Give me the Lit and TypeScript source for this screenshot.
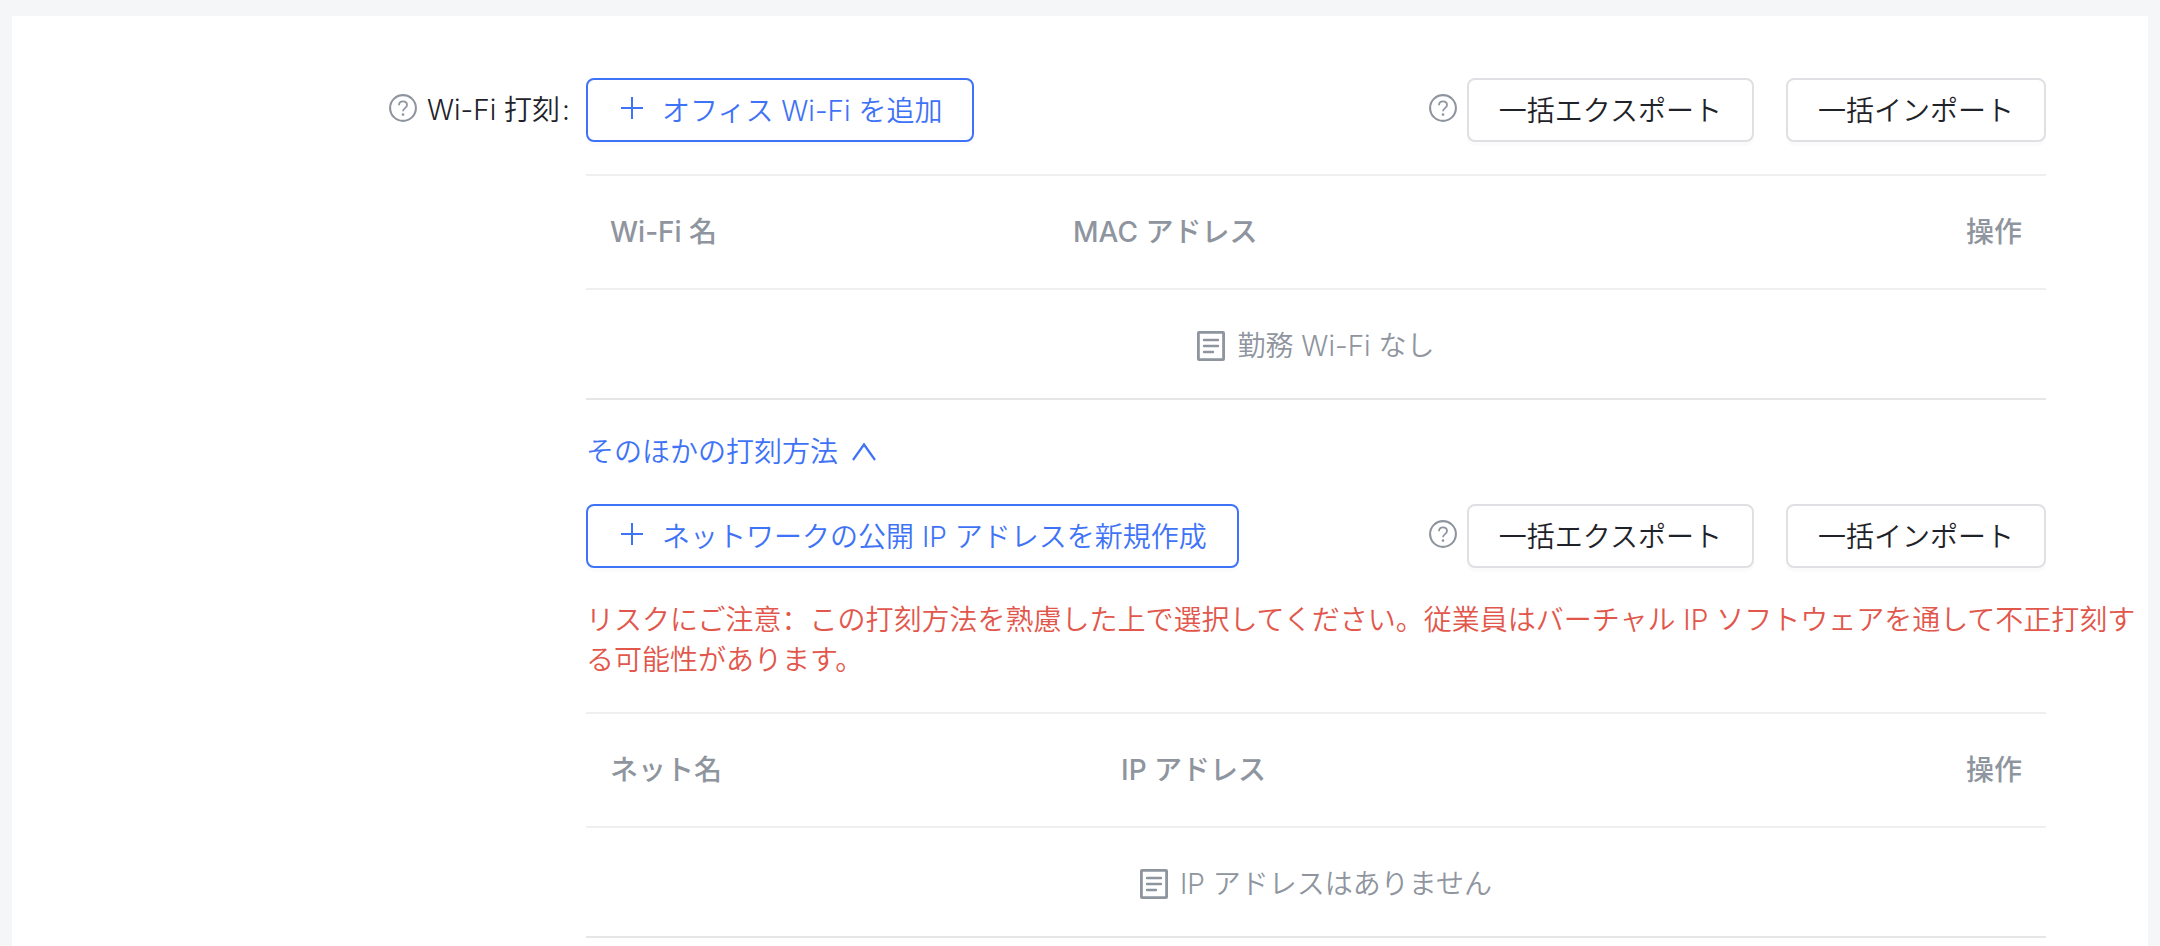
import { LitElement, html, svg, css } from "lit";
import { customElement, property, state } from "lit/decorators.js";

const helpIcon = html`<svg viewBox="0 0 28 28" width="28" height="28" fill="none" stroke="currentColor" aria-hidden="true">
  <circle cx="14" cy="14" r="12.9" stroke-width="2.1" />
  <path d="M10 11.3c0-2.4 1.7-4 4-4s4 1.5 4 3.7c0 3-4 3.2-4 6.2" stroke-width="1.8" />
  <circle cx="14" cy="20.6" r="1.3" fill="currentColor" stroke="none" />
</svg>`;

const plusIcon = html`<svg viewBox="0 0 28 28" width="28" height="28" fill="none" stroke="currentColor" stroke-width="2" aria-hidden="true">
  <path d="M14 3v22M3 14h22" />
</svg>`;

const docIcon = html`<svg viewBox="0 0 28 30" width="28" height="30" fill="none" stroke="currentColor" aria-hidden="true">
  <rect x="1.4" y="1.4" width="25.2" height="27.2" rx="0.6" stroke-width="2.8" />
  <path d="M7 9h14M7 15h14M7 21h9" stroke-width="2.4" stroke-linecap="round" />
</svg>`;

const chevron = (open: boolean) => html`<svg viewBox="0 0 28 28" width="28" height="28" fill="none" stroke="currentColor" stroke-width="2.2" aria-hidden="true">
  ${open ? svg`<path d="M3 22l11-15.500l11 15.500" />` : svg`<path d="M3 7l11 15.500l11-15.500" />`}
</svg>`;

@customElement("action-bar")
class ActionBar extends LitElement {
  @property() label = "";

  static styles = css`
    :host {
      display: flex;
      align-items: center;
      justify-content: space-between;
      gap: 32px;
    }
    .group {
      display: flex;
      align-items: center;
    }
    .btn {
      display: inline-flex;
      align-items: center;
      gap: 16px;
      height: 64px;
      box-sizing: border-box;
      padding: 2px 30px 0;
      border: 2px solid #dee0e3;
      border-radius: 8px;
      background: #fff;
      color: #1f2329;
      font: inherit;
      white-space: nowrap;
      cursor: pointer;
      box-shadow: 0 4px 0 rgba(0, 0, 0, 0.016);
    }
    .btn svg {
      margin-bottom: 6px;
    }
    .primary {
      border-color: #3f73f7;
      color: #3f73f7;
    }
    .help {
      display: flex;
      margin: 0 10px 4px 0;
      padding: 0;
      border: 0;
      background: none;
      color: #8f959e;
    }
    .import {
      margin-left: 32px;
    }
  `;

  render() {
    return html`
      <button class="btn primary">${plusIcon}<span>${this.label}</span></button>
      <div class="group">
        <button class="help" aria-label="ヘルプ">${helpIcon}</button>
        <button class="btn">一括エクスポート</button>
        <button class="btn import">一括インポート</button>
      </div>
    `;
  }
}

@customElement("record-table")
class RecordTable extends LitElement {
  @property({ attribute: false }) columns: string[] = [];
  @property() empty = "";
  @property() variant = "wifi";

  static styles = css`
    :host {
      display: block;
    }
    table {
      width: 100%;
      table-layout: fixed;
      border-collapse: separate;
      border-spacing: 0;
      border-top: 2px solid #efeff0;
      color: #8f959e;
    }
    th {
      height: 112px;
      padding: 0 24px;
      border-bottom: 2px solid #efeff0;
      font-weight: 450;
      text-align: left;
    }
    th:last-child {
      text-align: right;
    }
    .wifi th:first-child {
      width: 463px;
      box-sizing: border-box;
    }
    .ip th:first-child {
      width: 511px;
      box-sizing: border-box;
    }
    td {
      height: 104px;
      padding: 4px 0 0;
      border-bottom: 2px solid #e5e6e7;
    }
    .empty {
      display: flex;
      align-items: center;
      justify-content: center;
      gap: 12px;
    }
  `;

  render() {
    return html`
      <table class=${this.variant}>
        <thead>
          <tr>${this.columns.map((c) => html`<th scope="col">${c}</th>`)}</tr>
        </thead>
        <tbody>
          <tr>
            <td colspan=${this.columns.length}>
              <div class="empty">${docIcon}<span>${this.empty}</span></div>
            </td>
          </tr>
        </tbody>
      </table>
    `;
  }
}

@customElement("app-root")
class AppRoot extends LitElement {
  @state() private open = true;

  static styles = css`
    :host {
      display: block;
      box-sizing: border-box;
      min-height: 100vh;
      padding: 16px 12px 0;
      background: #f5f6f7;
      color: #1f2329;
      font: 350 28px/40px Inter, "Noto Sans CJK JP", sans-serif;
    }
    .sheet {
      display: grid;
      grid-template-columns: 562px minmax(0, 1fr);
      column-gap: 12px;
      box-sizing: border-box;
      min-height: calc(100vh - 16px);
      padding-top: 62px;
      background: #fff;
    }
    .label {
      display: flex;
      align-items: center;
      align-self: start;
      justify-content: flex-end;
      gap: 10px;
      height: 64px;
      padding-right: 4px;
    }
    .mark {
      margin-left: 2px;
    }
    .help {
      display: flex;
      margin-bottom: 4px;
      padding: 0;
      border: 0;
      background: none;
      color: #8f959e;
    }
    .block {
      margin-right: 102px;
    }
    record-table {
      margin-top: 32px;
    }
    .toggle {
      display: flex;
      align-items: center;
      gap: 12px;
      margin: 32px 0;
      padding: 0;
      border: 0;
      background: none;
      color: #3f73f7;
      font: inherit;
      cursor: pointer;
    }
    .warning {
      margin: 32px 0 0;
      color: #e2574c;
      font-family: Inter, "Noto Sans CJK SC", sans-serif;
    }
  `;

  render() {
    return html`
      <main class="sheet">
        <div class="label">
          <button class="help" aria-label="ヘルプ">${helpIcon}</button>
          <span>Wi-Fi 打刻<span class="mark">:</span></span>
        </div>
        <div>
          <section class="block">
            <action-bar label="オフィス Wi-Fi を追加"></action-bar>
            <record-table
              variant="wifi"
              .columns=${["Wi-Fi 名", "MAC アドレス", "操作"]}
              empty="勤務 Wi-Fi なし"
            ></record-table>
            <button class="toggle" aria-expanded=${this.open} @click=${() => (this.open = !this.open)}>
              <span>そのほかの打刻方法</span>${chevron(this.open)}
            </button>
          </section>
          ${this.open
            ? html`<section>
                <action-bar class="block" label="ネットワークの公開 IP アドレスを新規作成"></action-bar>
                <p class="warning">リスクにご注意：この打刻方法を熟慮した上で選択してください。従業員はバーチャル IP ソフトウェアを通して不正打刻する可能性があります。</p>
                <record-table
                  class="block"
                  variant="ip"
                  .columns=${["ネット名", "IP アドレス", "操作"]}
                  empty="IP アドレスはありません"
                ></record-table>
              </section>`
            : null}
        </div>
      </main>
    `;
  }
}
